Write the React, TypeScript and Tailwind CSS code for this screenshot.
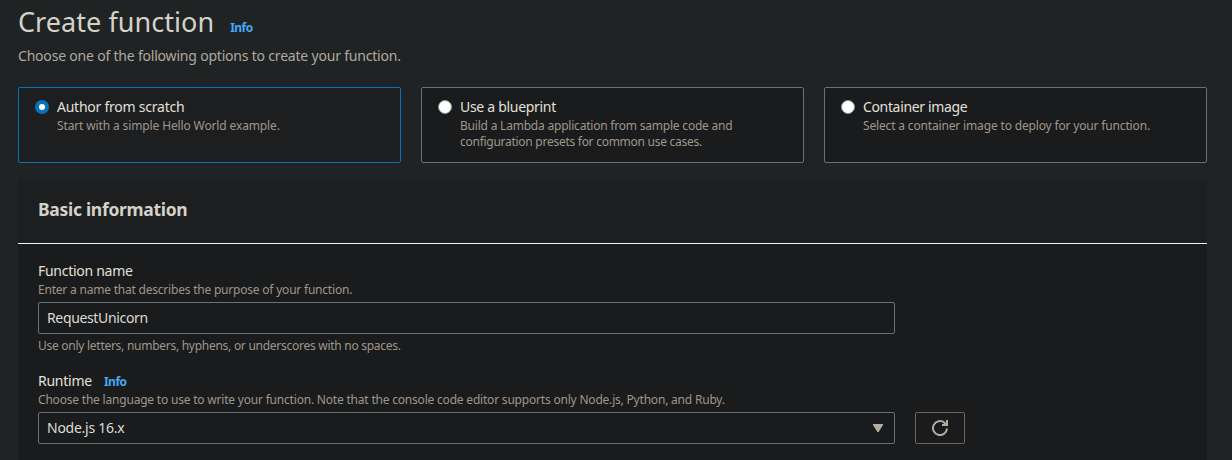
import { useState } from "react";

const options = [
  {
    title: "Author from scratch",
    titleClass: "tracking-[-0.24px]",
    lines: [{ text: "Start with a simple Hello World example.", className: "tracking-[-0.13px]" }],
  },
  {
    title: "Use a blueprint",
    titleClass: "tracking-[-0.3px]",
    lines: [
      { text: "Build a Lambda application from sample code and", className: "tracking-[-0.21px]" },
      { text: "configuration presets for common use cases.", className: "tracking-[-0.27px]" },
    ],
  },
  {
    title: "Container image",
    titleClass: "tracking-[-0.35px]",
    lines: [{ text: "Select a container image to deploy for your function.", className: "tracking-[-0.16px]" }],
  },
];

function Radio({ checked }: { checked: boolean }) {
  return (
    <span
      className={
        checked
          ? "mt-[12px] size-[14px] shrink-0 rounded-full border-[4px] border-[#0972bd] bg-white"
          : "mt-[12px] size-[14px] shrink-0 rounded-full border border-[#879596] bg-white"
      }
    />
  );
}

export default function App() {
  const [selected, setSelected] = useState(0);
  return (
    <div className="h-[460px] w-[1232px] overflow-hidden bg-[#1f2323] pr-[25px] pl-[18px] font-['Noto_Sans',sans-serif] whitespace-nowrap text-[#d5d1c9]">
      <header className="h-[87px]">
        <div className="flex h-[44px] items-baseline gap-4">
          <h1 className="text-[27px] leading-[44px] tracking-[0.05px]">Create function</h1>
          <a className="text-[12px] font-bold tracking-[-0.5px] text-[#44a9f8]">Info</a>
        </div>
        <p className="text-[14px] leading-6 tracking-[-0.2px] text-[#b0a99f]">
          Choose one of the following options to create your function.
        </p>
      </header>

      <div className="grid grid-cols-3 gap-5">
        {options.map((o, i) => (
          <div
            key={o.title}
            onClick={() => setSelected(i)}
            className={
              i === selected
                ? "flex h-[76px] gap-2 rounded-[2px] border border-[#0972bd] bg-[#1d1e20] pl-4"
                : "flex h-[76px] gap-2 rounded-[2px] border border-[#687078] bg-[#1a1b1c] pl-4"
            }
          >
            <Radio checked={i === selected} />
            <div className="pt-2">
              <div className={"mb-px text-[14px] leading-[21px] text-[#e3e0da] " + o.titleClass}>{o.title}</div>
              {o.lines.map((l) => (
                <p key={l.text} className={"text-[12px] leading-4 text-[#a0968a] " + l.className}>
                  {l.text}
                </p>
              ))}
            </div>
          </div>
        ))}
      </div>

      <section className="mt-4 h-[281px] bg-[#1a1b1c]">
        <div className="flex h-[65px] items-center border-b border-[#f2f3f3] bg-[#1c1e1f] px-5 pb-[3px]">
          <h2 className="text-[17.5px] font-bold tracking-[-0.3px]">Basic information</h2>
        </div>
        <div className="px-5 pt-[17px]">
          <div className="text-[14px] leading-5 tracking-[-0.28px] text-[#e3e0da]">Function name</div>
          <p className="pt-px text-[12px] leading-4 tracking-[-0.21px] text-[#a0968a]">
            Enter a name that describes the purpose of your function.
          </p>
          <div className="mt-1 flex h-8 w-[857px] items-center rounded-[2px] border border-[#687078] px-2 pb-0.5 text-[14px] tracking-[-0.35px] text-[#dedbd5]">
            RequestUnicorn
          </div>
          <p className="mt-1 text-[12px] leading-4 tracking-[-0.27px] text-[#a0968a]">
            Use only letters, numbers, hyphens, or underscores with no spaces.
          </p>
          <div className="mt-[17px] flex h-5 items-baseline gap-3 text-[14px] leading-5 tracking-[-0.25px] text-[#e3e0da]">
            Runtime
            <a className="text-[12px] font-bold tracking-[-0.5px] text-[#44a9f8]">Info</a>
          </div>
          <p className="pt-px text-[12px] leading-4 tracking-[-0.2px] text-[#a0968a]">
            Choose the language to use to write your function. Note that the console code editor supports only Node.js, Python, and Ruby.
          </p>
          <div className="mt-1 flex gap-5">
            <div className="flex h-8 w-[857px] items-center justify-between rounded-[2px] border border-[#687078] pr-[11px] pl-2 text-[14px] tracking-[-0.25px] text-[#dedbd5]">
              <span className="pb-0.5">Node.js 16.x</span>
              <svg width="10" height="8" viewBox="0 0 10 8" fill="#b5aca0">
                <path d="M0 0h10v1L5.6 8H4.4L0 1z" />
              </svg>
            </div>
            <button className="flex h-8 w-[50px] items-center justify-center rounded-[2px] border border-[#6e6558]">
              <svg width="16" height="16" viewBox="0 0 16 16" fill="none" stroke="#b5aca0" strokeWidth="2">
                <path d="M15 8.5a7 7 0 1 1-2.6-5.9L14.5 5" />
                <path d="M15 0v5h-5" />
              </svg>
            </button>
          </div>
        </div>
      </section>
    </div>
  );
}
